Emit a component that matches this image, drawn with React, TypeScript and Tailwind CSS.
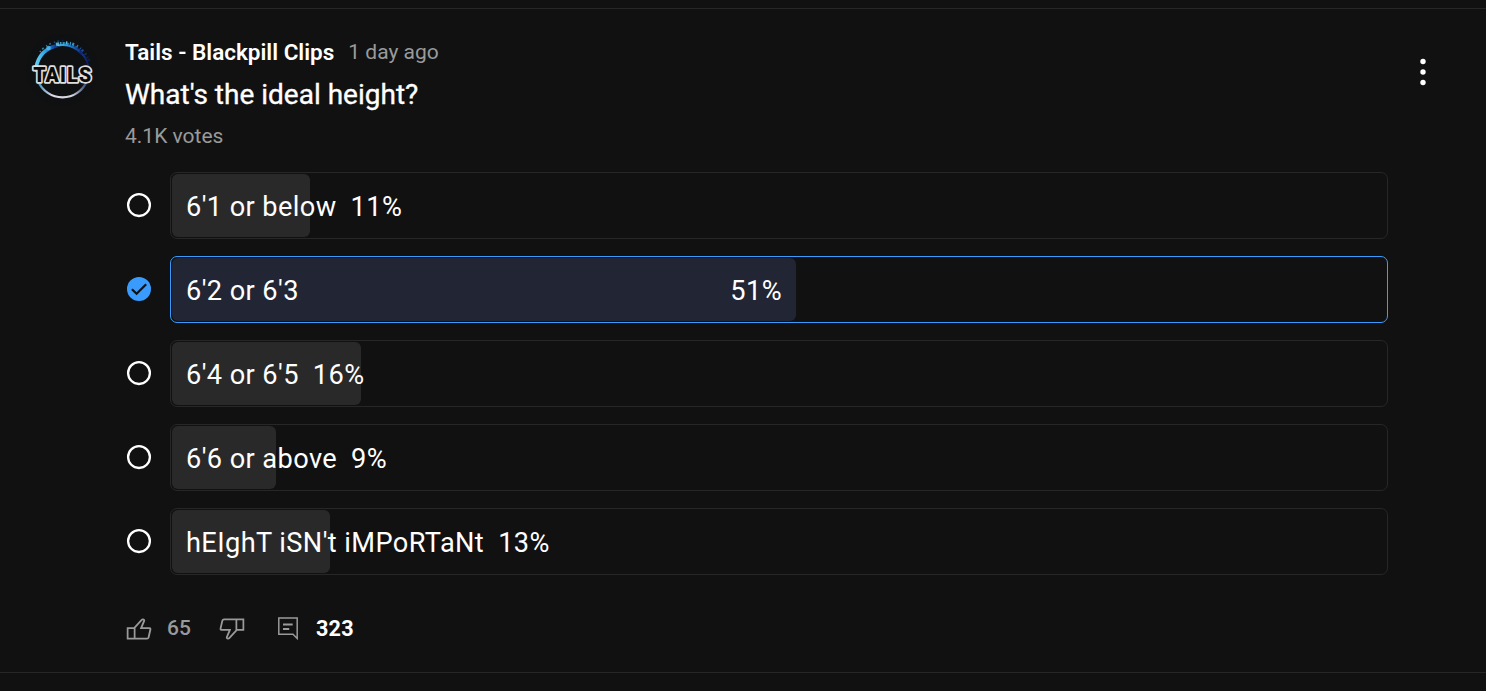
import clsx from 'clsx';

type PollOption = {
  id: number;
  label: string;
  percent: number;
  fill: number;
  selected?: boolean;
};

const options: PollOption[] = [
  { id: 1, label: "6'1 or below", percent: 11, fill: 11.37 },
  { id: 2, label: "6'2 or 6'3", percent: 51, fill: 51.4, selected: true },
  { id: 3, label: "6'4 or 6'5", percent: 16, fill: 15.57 },
  { id: 4, label: "6'6 or above", percent: 9, fill: 8.57 },
  { id: 5, label: "hEIghT iSN't iMPoRTaNt", percent: 13, fill: 13.01 },
];

export default function App() {
  return (
    <div className="h-[691px] w-full overflow-hidden bg-[#111111] pt-2 font-['Roboto',sans-serif] text-white">
      <article className="flex h-[665px] border-y border-[#272727] pl-[26px]">
        <Avatar />

        <div className="ml-[27px] w-[1263px] pt-[29px]">
          <header className="flex h-7 items-center leading-7">
            <span className="text-[22.5px] font-semibold">Tails - Blackpill Clips</span>
            <span className="ml-[14px] text-[21px] text-[#9a9a9a]">1 day ago</span>
          </header>
          <h1 className="mt-[11px] text-[28px] leading-9 font-normal [-webkit-text-stroke:0.35px_#fff]">
            What's the ideal height?
          </h1>
          <p className="mt-[9px] text-[21px] leading-7 text-[#9a9a9a]">4.1K votes</p>

          <ul className="mt-[22px] flex flex-col gap-[17px]">
            {options.map((option) => (
              <PollRow key={option.id} option={option} />
            ))}
          </ul>

          <footer className="mt-[38px] flex h-8 items-center text-[21.6px]">
            <LikeIcon />
            <span className="ml-[14px] w-[51px] text-[21px] font-medium text-[#9a9a9a]">65</span>
            <DislikeIcon />
            <CommentIcon />
            <span className="ml-[14px] font-bold tracking-[0.2px]">323</span>
          </footer>
        </div>

        <button type="button" aria-label="More actions" className="mt-[48px] ml-[31px] h-[30px] w-[8px]">
          <svg width="8" height="30" viewBox="0 0 8 30" fill="currentColor">
            <circle cx="4" cy="4.5" r="2.7" />
            <circle cx="4" cy="15" r="2.7" />
            <circle cx="4" cy="25.5" r="2.7" />
          </svg>
        </button>
      </article>
    </div>
  );
}

function PollRow({ option }: { option: PollOption }) {
  const { label, percent, fill, selected } = option;

  return (
    <li className="flex h-[67px] items-center">
      {selected ? <CheckedIcon /> : <UncheckedIcon />}
      <div
        className={clsx(
          'ml-[17px] grid h-full w-[1218px] items-center rounded-[7px] border p-px',
          selected ? 'border-[#3a9bff]' : 'border-[#272727]'
        )}
      >
        <div
          className={clsx(
            'col-start-1 row-start-1 h-full rounded-[6px]',
            selected ? 'bg-[#222533]' : 'bg-[#292929]'
          )}
          style={{ width: `${fill}%` }}
        />
        <div
          className={clsx(
            'col-start-1 row-start-1 flex px-[14px] pt-[2px] text-[27.2px] leading-9 tracking-[0.4px] whitespace-nowrap',
            selected ? 'justify-between' : 'gap-[14px]'
          )}
          style={selected ? { width: `${fill}%` } : undefined}
        >
          <span>{label}</span>
          <span>{percent}%</span>
        </div>
      </div>
    </li>
  );
}

function Avatar() {
  return (
    <svg className="mt-[25px] shrink-0" width="72" height="72" viewBox="0 0 72 72">
      <defs>
        <linearGradient id="ring" x1="0" y1="0.3" x2="1" y2="0.4">
          <stop offset="0" stopColor="#6ad8f5" />
          <stop offset="0.45" stopColor="#2a9be0" />
          <stop offset="0.75" stopColor="#174fae" />
          <stop offset="1" stopColor="#0c1c66" />
        </linearGradient>
        <linearGradient id="arc" x1="0" y1="0" x2="1" y2="0">
          <stop offset="0" stopColor="#3f93b8" />
          <stop offset="0.3" stopColor="#e2dbe8" />
          <stop offset="0.7" stopColor="#d0d4dc" />
          <stop offset="1" stopColor="#2b3f6e" />
        </linearGradient>
      </defs>
      <circle cx="36" cy="36" r="36" fill="#0f1012" />
      <g fill="none" stroke="url(#ring)">
        <path d="M10 38A26.5 27 0 0 1 63 38" strokeWidth="2" />
        <path d="M10 34C12 22 20 14 32 11.5" strokeWidth="3.6" />
        <path d="M30 10.5C40 8 50 12 56 20" strokeWidth="3.5" strokeDasharray="3.3 0.8 1.4 1.1 2.2 0.6" opacity="0.8" />
        <path d="M40 8.5C50 9 60 17 63.5 28" strokeWidth="2.5" strokeDasharray="1.3 2.7 0.9 1.5 2 3" opacity="0.8" />
        <path d="M14 18C19 11 28 7 38 6.5" strokeWidth="1.6" strokeDasharray="1.2 2.3 2 3.1" opacity="0.6" />
      </g>
      <circle cx="22.5" cy="14" r="2.3" fill="#4cc0ee" opacity="0.8" />
      <path d="M12 47A26.5 26.5 0 0 0 61 47" fill="none" stroke="url(#arc)" strokeWidth="2.2" />
      <text
        x="7.2"
        y="47.8"
        textLength="58"
        lengthAdjust="spacing"
        fontFamily="Roboto, sans-serif"
        fontSize="19.5"
        fontWeight="900"
        fill="#0a0a0a"
        stroke="#dedede"
        strokeWidth="3.4"
        strokeLinejoin="round"
        paintOrder="stroke"
      >
        TAILS
      </text>
    </svg>
  );
}

function UncheckedIcon() {
  return (
    <svg className="shrink-0" width="28" height="28" viewBox="0 0 28 28" fill="none">
      <circle cx="14" cy="13.1" r="10.9" stroke="currentColor" strokeWidth="2.3" />
    </svg>
  );
}

function CheckedIcon() {
  return (
    <svg className="shrink-0" width="28" height="28" viewBox="0 0 28 28" fill="none">
      <circle cx="14" cy="13.1" r="12" fill="#3a9bff" />
      <path d="M6.9 13.2l4.7 4.6L21.2 8.2" stroke="#111111" strokeWidth="2.2" />
    </svg>
  );
}

function LikeIcon() {
  return (
    <svg className="shrink-0" width="28" height="28" viewBox="0 0 16 16" fill="#9a9a9a">
      <path d="M12.42,14A1.54,1.54,0,0,0,14,12.87l1-4.24C15.12,7.76,15,7,14,7H10l1.48-3.54A1.17,1.17,0,0,0,10.24,2a1.49,1.49,0,0,0-1.08.46L5,7H1v7ZM9.89,3.14A.48.48,0,0,1,10.24,3a.29.29,0,0,1,.23.09S9,6.61,9,6.61L8.46,8H14c0,.08-1,4.65-1,4.65a.58.58,0,0,1-.58.35H6V7.39ZM2,8H5v5H2Z" />
    </svg>
  );
}

function DislikeIcon() {
  return (
    <svg className="shrink-0" width="28" height="28" viewBox="0 0 16 16" fill="#9a9a9a">
      <path d="M3.54,2A1.55,1.55,0,0,0,2,3.13L1,7.37C.83,8.24,1,9,2,9H6L4.52,12.54A1.17,1.17,0,0,0,5.71,14a1.49,1.49,0,0,0,1.09-.46L11,9h4V2ZM6.07,12.86a.51.51,0,0,1-.36.14.28.28,0,0,1-.22-.09l0-.05L7,9.39,7.5,8H2a1.5,1.5,0,0,1,0-.41L3,3.35A.58.58,0,0,1,3.54,3H10V8.61ZM14,8H11l0-5h3Z" />
    </svg>
  );
}

function CommentIcon() {
  return (
    <svg className="ml-[28px] shrink-0" width="28" height="28" viewBox="0 0 28 28" fill="none" stroke="#9a9a9a">
      <path d="M4.8 3h18.4v20.5l-4.2-4.2H4.8z" strokeWidth="1.5" />
      <path d="M9 9.5h9.7M9 14h6.2" strokeWidth="1.8" />
    </svg>
  );
}
